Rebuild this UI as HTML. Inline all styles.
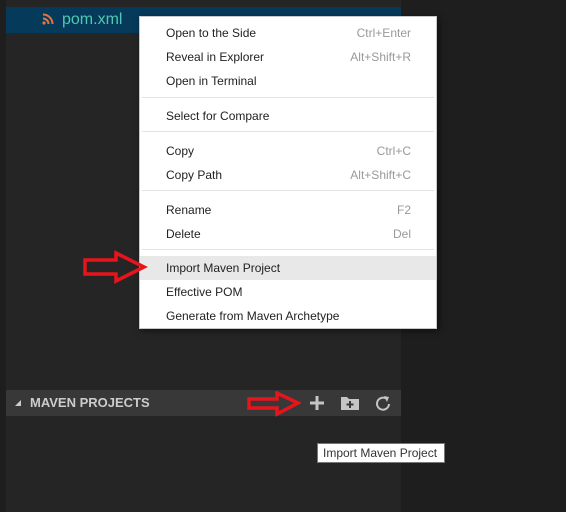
<!DOCTYPE html>
<html><head><meta charset="utf-8"><style>
*{margin:0;padding:0;box-sizing:border-box}
body{width:566px;height:512px;background:#1e1e1e;position:relative;overflow:hidden;font-family:"Segoe UI","Liberation Sans",sans-serif}
.side{position:absolute;left:6px;top:0;width:395px;height:512px;background:#252526}
.row{position:absolute;left:6px;top:7px;width:395px;height:26px;background:#063a5a}
.row span{position:absolute;left:56px;top:4px;color:#4ec9b0;font-size:16px}
.menu{position:absolute;left:139px;top:16px;width:298px;height:313px;background:#fff;border:1px solid #c8c8c8;box-shadow:2px 2px 6px rgba(0,0,0,.5)}
.it{position:absolute;left:0;width:296px;height:24px;font-size:12px;color:#222;line-height:24px}
.it b{font-weight:normal;position:absolute;left:26px}
.it i{font-style:normal;position:absolute;right:25px;color:#999}
.sep{position:absolute;left:2px;width:292px;height:1px;background:#e2e2e2}
.hdr{position:absolute;left:6px;top:390px;width:395px;height:26px;background:#383838}
.hdr span{position:absolute;left:24px;top:5px;color:#ccc;font-weight:bold;font-size:13px}
.tip{position:absolute;left:317px;top:443px;width:128px;height:20px;background:#fff;border:1px solid #777;font-size:12px;color:#333;line-height:18px;padding-left:5px}
</style></head><body>
<div class="side"></div>
<div class="row">
<svg style="position:absolute;left:36px;top:6px" width="12" height="12" viewBox="0 0 12 12"><circle cx="2" cy="10" r="1.6" fill="#e8743b"/><path d="M1 5.5a5.5 5.5 0 0 1 5.5 5.5M1 1.5a9.5 9.5 0 0 1 9.5 9.5" stroke="#e8743b" stroke-width="2" fill="none"/></svg>
<span>pom.xml</span></div>
<div class="menu">
<div class="it" style="top:4px"><b>Open to the Side</b><i>Ctrl+Enter</i></div>
<div class="it" style="top:28px"><b>Reveal in Explorer</b><i>Alt+Shift+R</i></div>
<div class="it" style="top:52px"><b>Open in Terminal</b></div>
<div class="sep" style="top:80px"></div>
<div class="it" style="top:87px"><b>Select for Compare</b></div>
<div class="sep" style="top:114px"></div>
<div class="it" style="top:122px"><b>Copy</b><i>Ctrl+C</i></div>
<div class="it" style="top:146px"><b>Copy Path</b><i>Alt+Shift+C</i></div>
<div class="sep" style="top:173px"></div>
<div class="it" style="top:181px"><b>Rename</b><i>F2</i></div>
<div class="it" style="top:205px"><b>Delete</b><i>Del</i></div>
<div class="sep" style="top:232px"></div>
<div class="it" style="top:239px;background:#e8e8e8"><b>Import Maven Project</b></div>
<div class="it" style="top:263px"><b>Effective POM</b></div>
<div class="it" style="top:287px"><b>Generate from Maven Archetype</b></div>
</div>
<svg style="position:absolute;left:82px;top:250px" width="66" height="34" viewBox="0 0 66 34"><path d="M3 10H34V3L62 17L34 31V24H3Z" fill="none" stroke="#e8141c" stroke-width="3.5"/></svg>
<div class="hdr">
<svg style="position:absolute;left:9px;top:10px" width="7" height="7"><path d="M6 0V6H0Z" fill="#ccc"/></svg>
<span>MAVEN PROJECTS</span>
<svg style="position:absolute;left:240px;top:1px" width="55" height="26" viewBox="0 0 55 26"><path d="M3 8H31V2L52 12L31 23V17H3Z" fill="none" stroke="#e8141c" stroke-width="3.5"/></svg>
<svg style="position:absolute;left:303px;top:5px" width="16" height="16"><path d="M8 1V15M1 8H15" stroke="#c5c5c5" stroke-width="3"/></svg>
<svg style="position:absolute;left:334px;top:5px" width="20" height="16"><path d="M1 2H7L9 4H19V15H1Z" fill="#c5c5c5"/><path d="M10 6V13M6.5 9.5H13.5" stroke="#383838" stroke-width="2"/></svg>
<svg style="position:absolute;left:369px;top:5px" width="16" height="16"><path d="M11 3.5A6 6 0 1 0 14 9" fill="none" stroke="#c5c5c5" stroke-width="2"/><path d="M9 1L14 2L12 7Z" fill="#c5c5c5"/></svg>
</div>
<div class="tip">Import Maven Project</div>
</body></html>
